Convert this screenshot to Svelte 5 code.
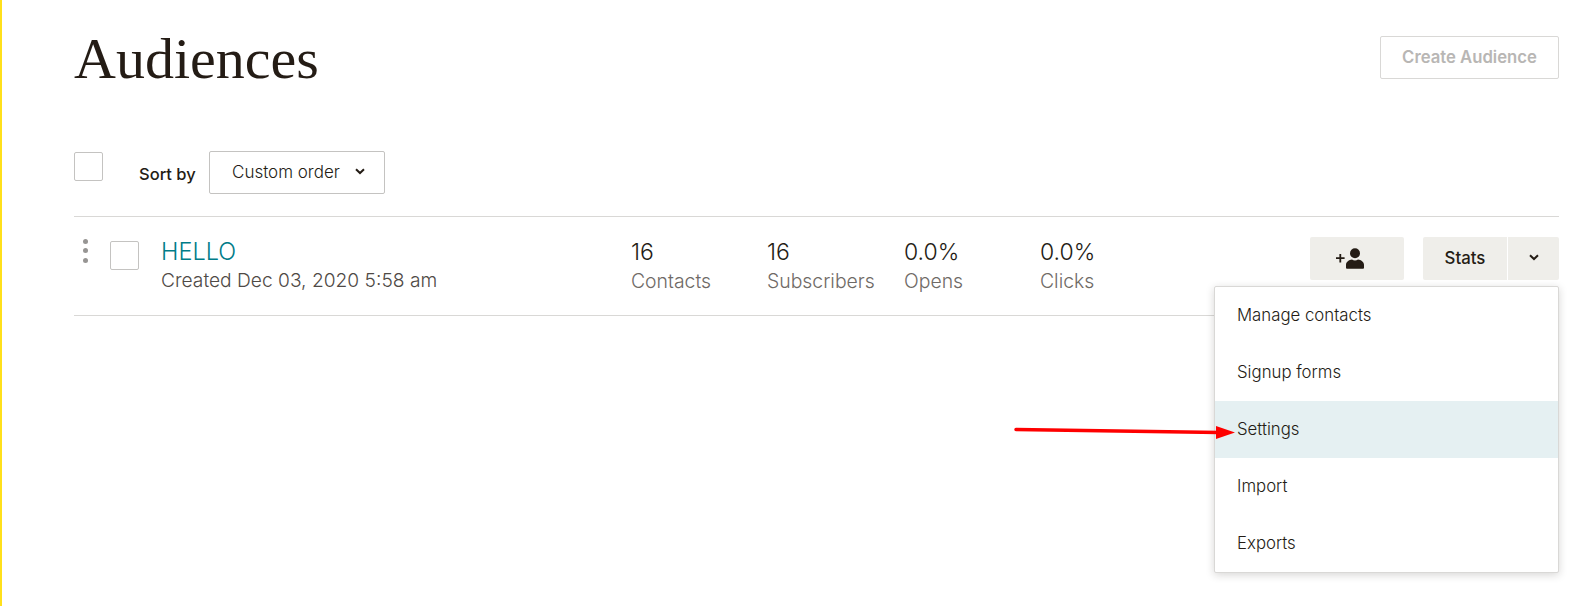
<script lang="ts">
	const stats = [
		{ value: '16', label: 'Contacts', width: 136 },
		{ value: '16', label: 'Subscribers', width: 137 },
		{ value: '0.0%', label: 'Opens', width: 136 },
		{ value: '0.0%', label: 'Clicks', width: 100 }
	];
	const menuItems = ['Manage contacts', 'Signup forms', 'Settings', 'Import', 'Exports'];
</script>

<div class="page">
	<header class="head">
		<h1>Audiences</h1>
		<button class="create" disabled>Create Audience</button>
	</header>

	<div class="toolbar">
		<span class="check"></span>
		<span class="sort-label">Sort by</span>
		<button class="select">
			Custom order
			<svg width="10" height="7" viewBox="0 0 10 7"><path d="M1 1.2 5 5l4-3.8" fill="none" stroke="#241c15" stroke-width="2" /></svg>
		</button>
	</div>

	<div class="row">
		<span class="dots"><i></i><i></i><i></i></span>
		<span class="check"></span>
		<div class="title">
			<span class="name">HELLO</span>
			<span class="created">Created Dec 03, 2020 5:58 am</span>
		</div>
		<div class="stats">
			{#each stats as s}
				<div class="stat" style="width: {s.width}px">
					<span class="value">{s.value}</span>
					<span class="label">{s.label}</span>
				</div>
			{/each}
		</div>
		<div class="actions">
			<button class="btn add" aria-label="Add contact">
				<svg width="30" height="22" viewBox="0 0 30 22">
					<path d="M1 11.2h8.6M5.3 7v8.4" stroke="#241c15" stroke-width="1.8" fill="none" />
					<circle cx="20" cy="6.2" r="5" fill="#241c15" />
					<path d="M11 21v-3.2c0-3 3-4.8 6-5.3 1.8 1.3 4.2 1.3 6 0 3 .5 6 2.3 6 5.3V21c0 .4-.4.7-1 .7H12c-.6 0-1-.3-1-.7z" fill="#241c15" />
				</svg>
			</button>
			<div class="split">
				<button class="btn stats-btn">Stats</button>
				<button class="btn caret" aria-label="More">
					<svg width="10" height="7" viewBox="0 0 10 7"><path d="M1 1.2 5 5l4-3.8" fill="none" stroke="#241c15" stroke-width="2" /></svg>
				</button>
			</div>
		</div>

		<ul class="menu">
			{#each menuItems as item}
				<li class:active={item === 'Settings'}>{item}</li>
			{/each}
		</ul>
	</div>

	<svg class="arrow" width="226" height="16" viewBox="0 0 226 16">
		<path d="M2 4.5 205 7.5" stroke="#fe0000" stroke-width="3.5" stroke-linecap="round" fill="none" />
		<path d="M202 1 221 7.5 202 14z" fill="#fe0000" />
	</svg>
</div>

<style>
	:global(body) {
		margin: 0;
		background: #fff;
	}

	.page {
		position: relative;
		box-sizing: border-box;
		width: 1582px;
		height: 606px;
		overflow: hidden;
		padding: 0 23px 0 72px;
		border-left: 2px solid #ffe01b;
		font-family: 'Inter', 'Liberation Sans', sans-serif;
		color: #241c15;
	}

	button {
		font-family: inherit;
		cursor: pointer;
	}

	.head {
		display: flex;
		justify-content: space-between;
		align-items: flex-start;
		height: 152px;
	}

	h1 {
		margin: 29px 0 0;
		font-family: 'Liberation Serif', serif;
		font-size: 58px;
		line-height: 60px;
		font-weight: 400;
	}

	.create {
		margin-top: 36px;
		width: 179px;
		height: 43px;
		background: #fff;
		border: 1px solid #d9d8d6;
		border-radius: 2px;
		color: #b8b6b4;
		font-size: 16.7px;
		font-weight: 600;
		padding-bottom: 2px;
	}

	.toolbar {
		display: flex;
		align-items: flex-start;
		height: 64px;
		border-bottom: 1px solid #d9d8d6;
	}

	.check {
		display: block;
		box-sizing: border-box;
		width: 29px;
		height: 29px;
		background: #fff;
		border: 1px solid #c4c3c1;
		border-radius: 2px;
		flex: none;
	}

	.sort-label {
		margin: 12px 0 0 36px;
		font-size: 16.5px;
		line-height: 20px;
		font-weight: 500;
		width: 70px;
		white-space: nowrap;
	}

	.select {
		box-sizing: border-box;
		display: flex;
		align-items: center;
		justify-content: space-between;
		width: 176px;
		height: 43px;
		margin-top: -1px;
		padding: 0 19px 2px 22px;
		background: #fff;
		border: 1px solid #c4c3c1;
		border-radius: 2px;
		color: #241c15;
		font-size: 17px;
		font-weight: 300;
	}

	.row {
		position: relative;
		display: flex;
		align-items: flex-start;
		height: 98px;
		border-bottom: 1px solid #d9d8d6;
	}

	.dots {
		display: flex;
		flex-direction: column;
		gap: 4.5px;
		width: 36px;
		padding: 21.5px 0 0 9px;
		box-sizing: border-box;
		flex: none;
	}

	.dots i {
		display: block;
		width: 5px;
		height: 5px;
		border-radius: 50%;
		background: #979593;
	}

	.row > .check {
		margin-top: 24px;
	}

	.title {
		display: flex;
		flex-direction: column;
		margin: 21px 0 0 22px;
		width: 470px;
	}

	.name {
		font-size: 23.5px;
		line-height: 28px;
		font-weight: 300;
		color: #007c89;
	}

	.created {
		font-size: 19.2px;
		line-height: 28px;
		font-weight: 300;
		color: #4f4a46;
	}

	.stats {
		display: flex;
		margin-top: 21px;
	}

	.stat {
		display: flex;
		flex-direction: column;
	}

	.value {
		font-size: 23px;
		line-height: 28px;
		font-weight: 300;
	}

	.label {
		font-size: 19.4px;
		line-height: 28px;
		font-weight: 300;
		color: #6f6a66;
		margin-top: 1px;
	}

	.actions {
		display: flex;
		gap: 19px;
		margin: 20px 0 0 auto;
	}

	.btn {
		height: 43px;
		border: 0;
		background: #efeeea;
		color: #241c15;
		font-size: 16.8px;
		font-weight: 500;
		padding: 0 0 2px;
		display: flex;
		align-items: center;
		justify-content: center;
	}

	.add {
		width: 94px;
		border-radius: 2px;
		padding-right: 15px;
	}

	.split {
		display: flex;
		gap: 1px;
	}

	.stats-btn {
		width: 84px;
		border-radius: 2px 0 0 2px;
	}

	.caret {
		width: 51px;
		border-radius: 0 2px 2px 0;
	}

	.menu {
		position: absolute;
		top: 69px;
		right: 0;
		box-sizing: border-box;
		width: 345px;
		height: 287px;
		margin: 0;
		padding: 0;
		list-style: none;
		background: #fff;
		border: 1px solid #d9d8d6;
		border-radius: 2px;
		box-shadow: 0 2px 8px rgba(36, 28, 21, 0.18);
		z-index: 1;
	}

	.menu li {
		box-sizing: border-box;
		height: 57px;
		padding: 0 22px 1px;
		display: flex;
		align-items: center;
		font-size: 16.8px;
		font-weight: 300;
	}

	.menu li.active {
		background: #e5f0f2;
	}

	.arrow {
		position: absolute;
		left: 1012px;
		top: 425px;
		z-index: 2;
	}
</style>
